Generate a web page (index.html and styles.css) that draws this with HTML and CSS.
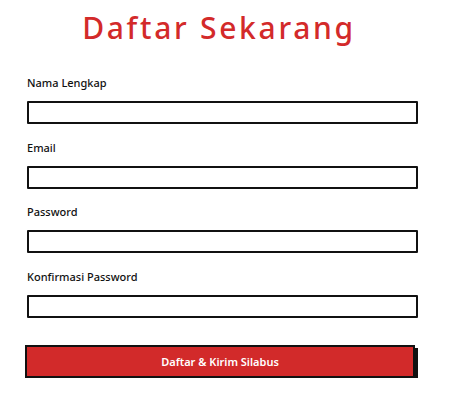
FILE: index.html
```html
<!DOCTYPE html>
<html lang="id">
<head>
  <meta charset="UTF-8">
  <meta name="viewport" content="width=device-width, initial-scale=1.0">
  <title>Daftar Sekarang</title>
  <link rel="stylesheet" href="styles.css">
</head>
<body>
<div class="signup">
  <h1 class="title">Daftar Sekarang</h1>

  <form class="form">
    <div class="field">
      <label for="nama">Nama Lengkap</label>
      <input type="text" id="nama">
    </div>
    <div class="field">
      <label for="email">Email</label>
      <input type="email" id="email">
    </div>
    <div class="field">
      <label for="password">Password</label>
      <input type="password" id="password">
    </div>
    <div class="field">
      <label for="konfirmasi">Konfirmasi Password</label>
      <input type="password" id="konfirmasi">
    </div>

    <button type="button" class="submit-btn">Daftar &amp; Kirim Silabus</button>
  </form>
</div>
</body>
</html>
```

FILE: styles.css
```css
body {
  margin: 0;
  padding: 0;
  background-color: #ffffff;
  font-family: "Noto Sans", Arial, sans-serif;
  color: #111;
}
.signup {
  width: 392px;
  padding: 7px 0 0 27px;
}
.title {
  margin: 0;
  padding-left: 22px;
  width: 340px;
  text-align: center;
  font-size: 30px;
  font-weight: 500;
  letter-spacing: 2.7px;
  color: #d32a2a;
  line-height: 42px;
}
.form {
  margin-top: 27px;
}
.field {
  height: 64.7px;
}
label {
  display: block;
  font-size: 11px;
  font-weight: 500;
  line-height: 14px;
  margin-bottom: 11px;
}
input {
  display: block;
  box-sizing: border-box;
  width: 391px;
  height: 23px;
  margin: 0;
  border: 2px solid #111;
  border-radius: 1px;
  background: #fff;
  outline: none;
}
.submit-btn {
  display: block;
  box-sizing: border-box;
  width: 390px;
  height: 33px;
  margin: 10px 0 0 -2px;
  background-color: #d22a2a;
  color: #fff;
  font-family: inherit;
  font-size: 11px;
  font-weight: 600;
  border: 2px solid #111;
  box-shadow: 3px 3px 0 #111;
  cursor: pointer;
}
```
